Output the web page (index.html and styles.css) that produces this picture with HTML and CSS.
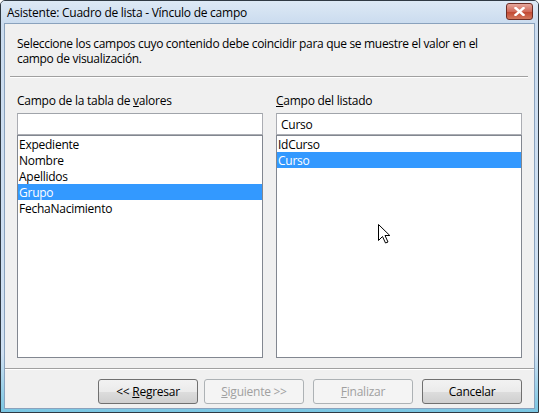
FILE: index.html
```html
<!DOCTYPE html>
<html lang="es">
<head>
<meta charset="utf-8">
<title>Asistente: Cuadro de lista - Vínculo de campo</title>
<link rel="stylesheet" href="styles.css">
</head>
<body>
<div class="window">
  <div class="titlebar">
    <span class="title">Asistente: Cuadro de lista - Vínculo de campo</span>
    <span class="close" aria-label="Cerrar">
      <svg width="11" height="9" viewBox="0 0 11 9"><path d="M1.5 1 L9.5 8 M9.5 1 L1.5 8" stroke="#fff" stroke-width="2.4" stroke-linecap="square"/></svg>
    </span>
  </div>
  <div class="frame">
    <div class="client">
      <p class="intro">Seleccione los campos cuyo contenido debe coincidir para que se muestre el valor en el campo de visualización.</p>
      <div class="sep"></div>
      <div class="columns">
        <div class="col">
          <div class="label">Campo de la tabla de <u>v</u>alores</div>
          <div class="textbox"></div>
          <ul class="listbox">
            <li>Expediente</li>
            <li>Nombre</li>
            <li>Apellidos</li>
            <li class="sel">Grupo</li>
            <li>FechaNacimiento</li>
          </ul>
        </div>
        <div class="col">
          <div class="label"><u>C</u>ampo del listado</div>
          <div class="textbox">Curso</div>
          <ul class="listbox">
            <li>IdCurso</li>
            <li class="sel">Curso</li>
          </ul>
        </div>
      </div>
      <div class="footer">
        <button class="btn">&lt;&lt; <u>R</u>egresar</button>
        <button class="btn disabled"><u>S</u>iguiente &gt;&gt;</button>
        <button class="btn disabled wide-gap"><u>F</u>inalizar</button>
        <button class="btn wide-gap">Cancelar</button>
      </div>
      <svg class="cursor" width="13" height="20" viewBox="0 0 13 20"><path d="M0.5 0.5 L0.5 16.5 L4.5 12.5 L7.5 19 L10 18 L7 11.5 L11.8 11.5 Z" fill="#fff" stroke="#000" stroke-width="1" stroke-linejoin="miter"/></svg>
    </div>
  </div>
</div>
</body>
</html>
```
FILE: styles.css
```css
html, body {
  margin: 0;
  padding: 0;
}
body {
  font-family: "Open Sans", "Noto Sans", "DejaVu Sans", sans-serif;
  font-size: 12px;
  color: #000;
  background: #fff;
}
.window {
  width: 539px;
  height: 413px;
  box-sizing: border-box;
  border: 1px solid #303a44;
  border-radius: 5px 5px 0 0;
  background: #c3d6ec;
  display: flex;
  flex-direction: column;
  overflow: hidden;
}
.titlebar {
  height: 22px;
  flex: none;
  display: flex;
  justify-content: space-between;
  align-items: flex-start;
  background: linear-gradient(#dde9f5, #cbdcef);
}
.title {
  padding-left: 6px;
  line-height: 23px;
  letter-spacing: -0.25px;
}
.close {
  margin: 2px 5px 0 0;
  width: 25px;
  height: 15px;
  border: 1px solid #6d2d25;
  border-radius: 3px;
  background: linear-gradient(#e6a79c, #d06a5a 50%, #c0452f 51%, #d3785e);
  display: flex;
  align-items: center;
  justify-content: center;
}
.frame {
  flex: 1;
  padding: 0 3px 3px;
  display: flex;
  background: linear-gradient(#cbdcef, #cfe0f2 85%, #79c6e2);
}
.client {
  flex: 1;
  position: relative;
  border: 1px solid #8aa2bd;
  background: #f0f0f0;
  display: flex;
  flex-direction: column;
}
.intro {
  margin: 0;
  padding: 12px 12px 0 12px;
  line-height: 15px;
  letter-spacing: -0.32px;
  width: 470px;
}
.sep {
  margin: 10px 6px 0 5px;
  border-top: 1px solid #a0a0a0;
  border-bottom: 1px solid #fff;
}
.columns {
  display: grid;
  grid-template-columns: 246px 246px;
  column-gap: 13px;
  padding: 15px 0 0 12px;
}
.label {
  line-height: 15px;
  height: 15px;
  letter-spacing: -0.25px;
  margin-bottom: 5px;
}
.textbox {
  box-sizing: border-box;
  height: 22px;
  border: 1px solid #abadb3;
  border-top-color: #a0a4aa;
  background: #fff;
  padding: 0 4px;
  line-height: 21px;
  letter-spacing: -0.25px;
}
.listbox {
  list-style: none;
  margin: 0;
  padding: 0;
  height: 223px;
  box-sizing: border-box;
  border: 1px solid #828790;
  background: #fff;
}
.listbox li {
  height: 16px;
  line-height: 17px;
  padding-left: 1px;
  letter-spacing: -0.25px;
}
.listbox li.sel {
  background: #3399ff;
  color: #fff;
}
.footer {
  margin-top: 10px;
  border-top: 1px solid #a0a0a0;
  box-shadow: inset 0 1px 0 #fff;
  padding: 10px 0 0 93px;
  display: flex;
}
.btn {
  font: inherit;
  letter-spacing: -0.25px;
  width: 100px;
  height: 25px;
  box-sizing: border-box;
  border: 1px solid #707070;
  border-radius: 3px;
  background: linear-gradient(#f2f2f2, #ebebeb 50%, #dddddd 51%, #cfcfcf);
  color: #000;
  padding: 0;
  margin-right: 6px;
}
.btn.wide-gap {
  margin-left: 3px;
}
.btn.disabled {
  border-color: #adb2b5;
  background: #f4f4f4;
  color: #a0a0a0;
}
.cursor {
  position: absolute;
  left: 373px;
  top: 200px;
}
```
